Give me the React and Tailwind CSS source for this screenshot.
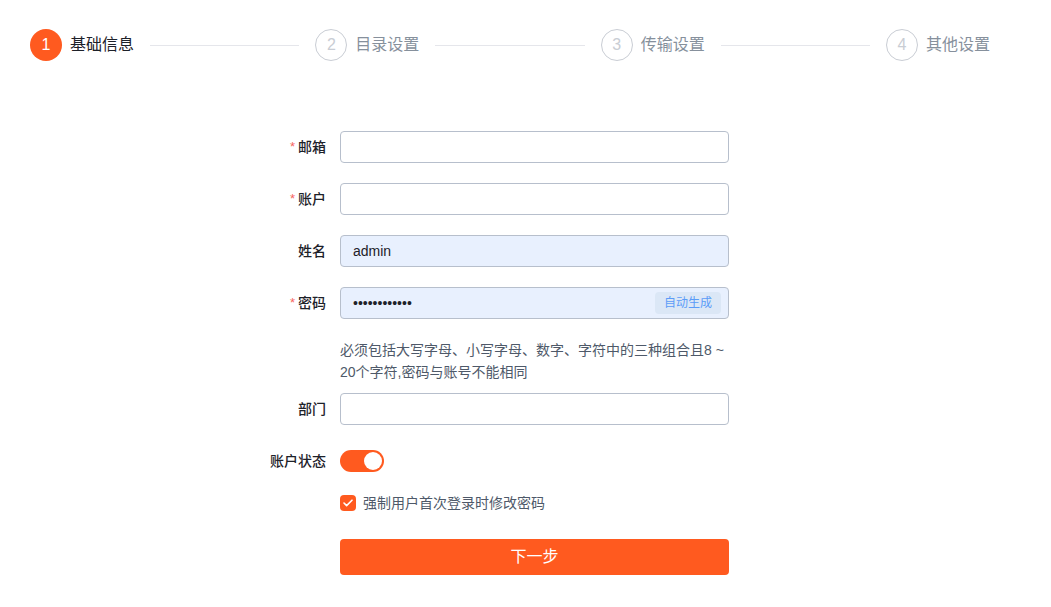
import { useState } from "react";

const FONT = { fontFamily: '"Liberation Sans", "Noto Sans CJK SC", sans-serif' };

const steps = ["基础信息", "目录设置", "传输设置", "其他设置"];

function Steps({ current = 0 }) {
  return (
    <div className="flex items-center pl-[30px] pr-[61px] pt-[29px]">
      {steps.map((s, i) => {
        const active = i === current;
        const last = i === steps.length - 1;
        return (
          <div key={s} className={`flex items-center ${last ? "" : "flex-1"}`}>
            <div
              className={`w-8 h-8 rounded-full flex items-center justify-center text-[16px] shrink-0 ${
                active ? "bg-[#ff5a1f] text-white" : "border border-[#c9cdd4] text-[#c9cdd4]"
              }`}
            >
              {i + 1}
            </div>
            <span className={`ml-2 text-[16px] leading-6 whitespace-nowrap ${active ? "text-[#1d2129]" : "text-[#86909c]"}`}>{s}</span>
            {!last && <div className="flex-1 h-px bg-[#e5e6eb] mx-4" />}
          </div>
        );
      })}
    </div>
  );
}

function Label({ children, required }) {
  return (
    <div className="h-8 flex items-center justify-end text-[14px] font-medium text-[#1d2129]">
      {required && <span className="text-[#f76560] mr-[3px] text-[13px]">*</span>}
      {children}
    </div>
  );
}

function Input({ value, filled, type = "text", children }) {
  return (
    <div
      className={`relative h-8 rounded border border-[#b7bfcc] flex items-center px-3 text-[14px] text-[#1d2129] ${
        filled ? "bg-[#e8f0fe]" : "bg-white"
      }`}
    >
      <input
        type={type}
        defaultValue={value}
        className="flex-1 bg-transparent outline-none text-[14px] text-[#1d2129]"
        style={FONT}
      />
      {children}
    </div>
  );
}

export default function App() {
  const [on, setOn] = useState(true);
  const [force, setForce] = useState(true);

  return (
    <div className="w-[1051px] h-[607px] bg-white overflow-hidden" style={FONT}>
      <Steps current={0} />

      <div className="ml-[226px] mt-[70px] grid grid-cols-[100px_389px] gap-x-[14px] items-start">
        <Label required>邮箱</Label>
        <Input />

        <div className="col-span-2 h-5" />
        <Label required>账户</Label>
        <Input />

        <div className="col-span-2 h-5" />
        <Label>姓名</Label>
        <Input value="admin" filled />

        <div className="col-span-2 h-5" />
        <Label required>密码</Label>
        <Input value="abcdefghijkl" type="password" filled>
          <span className="ml-2 -mr-[5px] px-[9px] h-[22px] leading-[22px] rounded-sm bg-[#dbe7f6] text-[#5b9cf8] text-[12px] whitespace-nowrap">
            自动生成
          </span>
        </Input>

        <div />
        <p className="mt-5 mb-[10px] text-[14px] leading-[22px] text-[#4e5969]">
          必须包括大写字母、小写字母、数字、字符中的三种组合且8 ~ 20个字符,密码与账号不能相同
        </p>

        <Label>部门</Label>
        <Input />

        <div className="col-span-2 h-5" />
        <Label>账户状态</Label>
        <div className="h-8 flex items-center">
          <button
            onClick={() => setOn(!on)}
            className={`w-11 h-[22px] rounded-full flex items-center px-[2px] ${on ? "bg-[#ff5a1f] justify-end" : "bg-[#c9cdd4] justify-start"}`}
          >
            <span className="w-[18px] h-[18px] rounded-full bg-white" />
          </button>
        </div>

        <div className="col-span-2 h-[15px]" />
        <div />
        <label className="flex items-center h-[22px] cursor-pointer" onClick={() => setForce(!force)}>
          <span className={`w-4 h-4 rounded-sm flex items-center justify-center ${force ? "bg-[#ff5a1f]" : "border border-[#c9cdd4]"}`}>
            {force && (
              <svg width="10" height="8" viewBox="0 0 10 8" fill="none">
                <path d="M1 4l2.6 2.6L9 1.2" stroke="white" strokeWidth="1.6" strokeLinecap="round" strokeLinejoin="round" />
              </svg>
            )}
          </span>
          <span className="ml-[7px] text-[14px] text-[#4e5969]">强制用户首次登录时修改密码</span>
        </label>

        <div className="col-span-2 h-[25px]" />
        <div />
        <button className="h-9 rounded bg-[#ff5a1f] text-white text-[16px]">下一步</button>
      </div>
    </div>
  );
}
